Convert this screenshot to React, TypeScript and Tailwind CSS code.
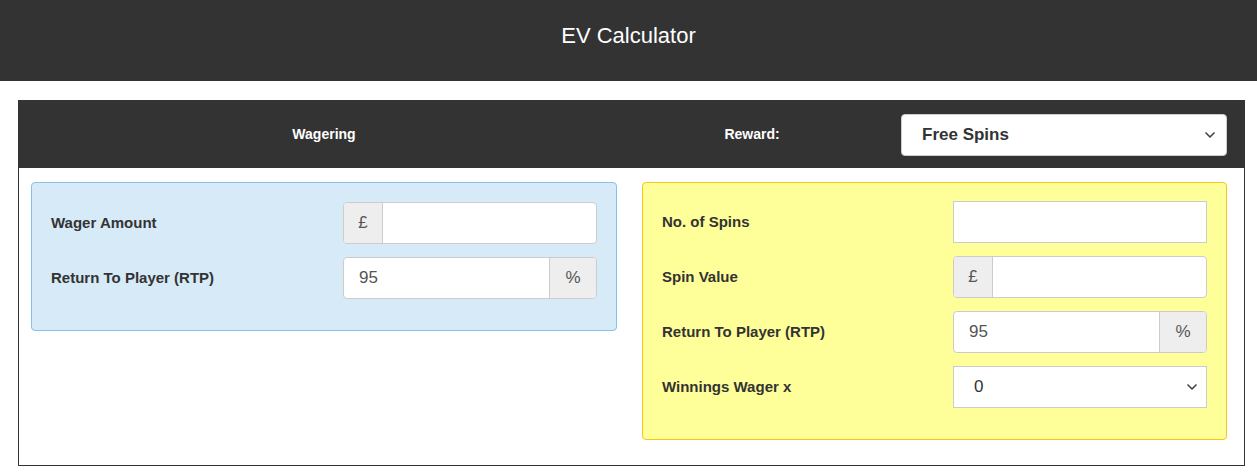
import { ChevronDown } from "lucide-react";

const font = "font-['Liberation_Sans',Arial,sans-serif]";

function PrefixInput({ prefix }: { prefix: string }) {
  return (
    <div className="flex h-[42px] w-[254px] overflow-hidden rounded border border-[#ccc] bg-white">
      <div className="flex w-[39px] items-center justify-center border-r border-[#ccc] bg-[#eee] text-[17px] text-[#555]">
        {prefix}
      </div>
      <div className="flex-1" />
    </div>
  );
}

function SuffixInput({ value, suffix }: { value: string; suffix: string }) {
  return (
    <div className="flex h-[42px] w-[254px] overflow-hidden rounded border border-[#ccc] bg-white">
      <div className="flex flex-1 items-center px-[15px] text-[17px] text-[#555]">
        {value}
      </div>
      <div className="flex w-[47px] items-center justify-center border-l border-[#ccc] bg-[#eee] text-[17px] text-[#555]">
        {suffix}
      </div>
    </div>
  );
}

function Row({
  label,
  wide,
  children,
}: {
  label: string;
  wide?: boolean;
  children: React.ReactNode;
}) {
  return (
    <div className="flex items-center">
      <div
        className={`${wide ? "w-[292px]" : "w-[291px]"} shrink-0 text-[15px] font-bold text-[#333]`}
      >
        {label}
      </div>
      {children}
    </div>
  );
}

export default function App() {
  return (
    <div className={`${font} min-h-[473px] bg-white`}>
      <header className="flex h-[81px] items-center justify-center bg-[#333] pb-[10px]">
        <h1 className="text-[22px] text-white">EV Calculator</h1>
      </header>

      <div className="mx-[18px] mt-[19px] w-[1227px] border border-[#333]">
        <div className="flex h-[67px] items-center bg-[#333]">
          <div className="w-[610px] text-center text-[14px] font-bold text-white">
            Wagering
          </div>
          <div className="w-[246px] text-center text-[14px] font-bold text-white">
            Reward:
          </div>
          <div className="flex-1 pl-[26px] pr-[17px]">
            <div className="flex h-[42px] items-center justify-between rounded border border-[#ccc] bg-white pl-[20px] pr-[8px] text-[17px] font-bold text-[#333]">
              <span>Free Spins</span>
              <ChevronDown className="h-4 w-4 text-[#444]" strokeWidth={2.5} />
            </div>
          </div>
        </div>

        <div className="flex items-start pt-[14px] pb-[25px]">
          <div className="w-[610px] pl-[12px] pr-[12px]">
            <div className="flex flex-col gap-[13px] rounded border border-[#85c1e9] bg-[#d6eaf8] px-[19px] pt-[19px] pb-[31px]">
              <Row label="Wager Amount" wide>
                <PrefixInput prefix="£" />
              </Row>
              <Row label="Return To Player (RTP)" wide>
                <SuffixInput value="95" suffix="%" />
              </Row>
            </div>
          </div>
          <div className="flex-1 pl-[13px] pr-[18px]">
            <div className="flex flex-col gap-[13px] rounded border border-[#f5c518] bg-[#ffff99] px-[19px] pt-[18px] pb-[31px]">
              <Row label="No. of Spins">
                <div className="h-[42px] w-[254px] border border-[#ccc] bg-white" />
              </Row>
              <Row label="Spin Value">
                <PrefixInput prefix="£" />
              </Row>
              <Row label="Return To Player (RTP)">
                <SuffixInput value="95" suffix="%" />
              </Row>
              <Row label="Winnings Wager x">
                <div className="flex h-[42px] w-[254px] items-center justify-between border border-[#ccc] bg-white pl-[20px] pr-[6px] text-[17px] text-[#333]">
                  <span>0</span>
                  <ChevronDown className="h-4 w-4 text-[#444]" strokeWidth={2.5} />
                </div>
              </Row>
            </div>
          </div>
        </div>
      </div>
    </div>
  );
}
